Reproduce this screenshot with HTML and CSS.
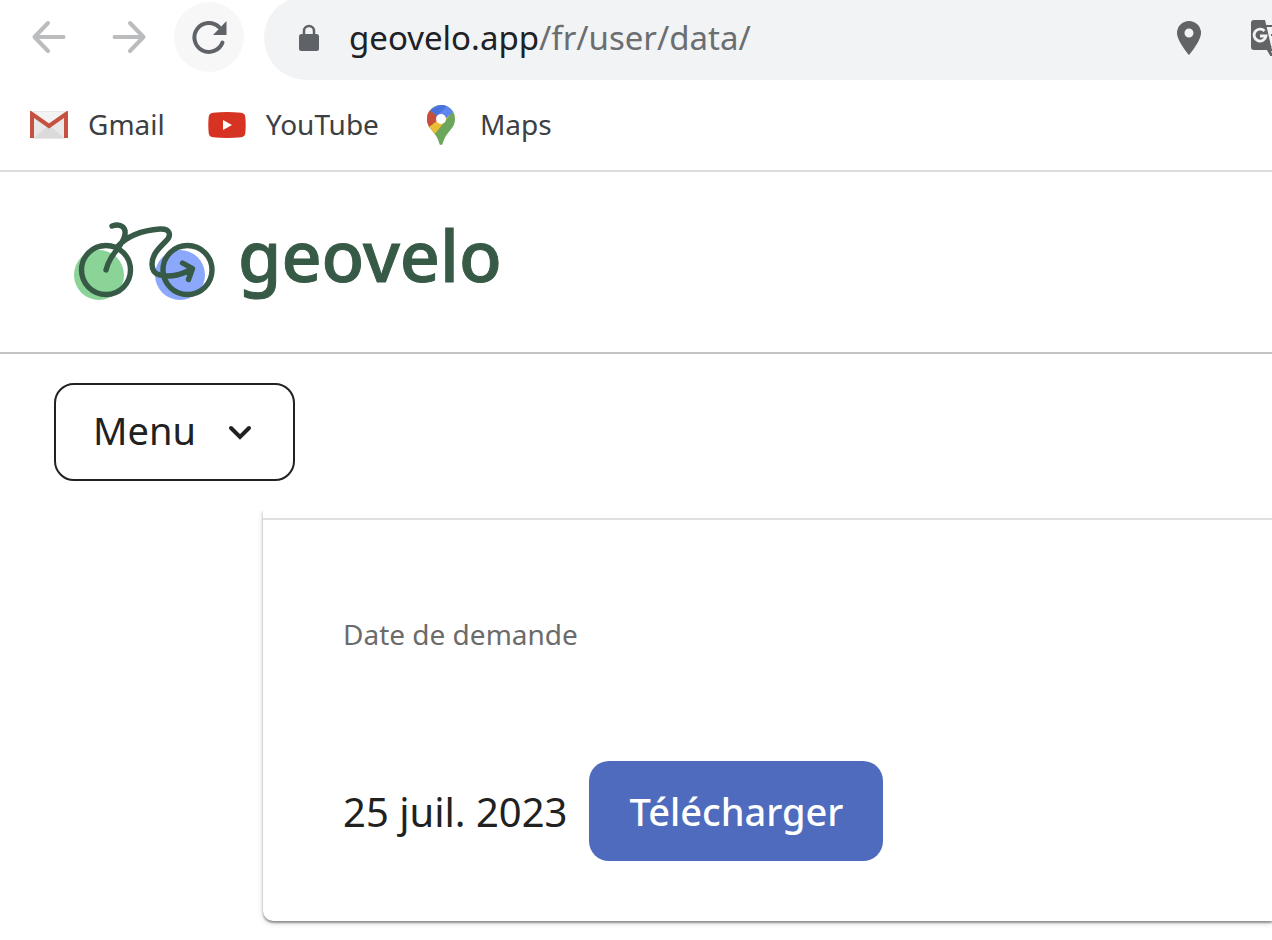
FILE: index.html
```html
<!DOCTYPE html>
<html lang="fr">
<head>
<meta charset="utf-8">
<title>Geovelo</title>
<link rel="stylesheet" href="styles.css">
</head>
<body>
<div class="browser">
  <div class="toolbar">
    <button class="tool" aria-label="Retour">
      <svg width="36" height="36" viewBox="0 0 36 36" class="arrow"><path d="M32.500 18H3.500M17 4L3.500 18 17 32"/></svg>
    </button>
    <button class="tool" aria-label="Avancer">
      <svg width="36" height="36" viewBox="0 0 36 36" class="arrow"><path d="M3.500 18h29M19 4l13.500 14L19 32"/></svg>
    </button>
    <button class="tool tool-active" aria-label="Actualiser">
      <svg width="40" height="40" viewBox="0 0 40 40"><path d="M33.500 25.500A14.500 14.500 0 1 1 30 10" fill="none" stroke="#5f6368" stroke-width="4" stroke-linecap="round"/><path d="M37.500 4v14H24z" fill="#5f6368"/></svg>
    </button>
    <div class="omnibox">
      <svg class="lock" width="20" height="28" viewBox="0 0 20 28"><path d="M5 11V7a5 5 0 0 1 10 0v4" fill="none" stroke="#5f6368" stroke-width="2.500"/><rect y="10" width="20" height="17" rx="2.500" fill="#5f6368"/></svg>
      <span class="url">geovelo.app<span class="path">/fr/user/data/</span></span>
      <button class="chip" aria-label="Position">
        <svg width="24" height="34" viewBox="0 0 24 34"><path fill-rule="evenodd" d="M12 0A12 12 0 0 0 0 12c0 8 12 22 12 22s12-14 12-22A12 12 0 0 0 12 0zm0 7.500a4.500 4.500 0 1 1 0 9 4.500 4.500 0 0 1 0-9z" fill="#616365"/></svg>
      </button>
      <button class="chip" aria-label="Traduire">
        <svg width="40" height="36" viewBox="0 0 40 36"><path d="M14 6h22q3 0 3 3v23q0 3-3 3H20z" fill="#f1f3f4" stroke="#616365" stroke-width="2"/><path d="M17 30l3 5 6-5zM20 15h14M26 11v4M30 15c-1 6-5 9-9 12M23 18c2 4 5 6 9 8" fill="none" stroke="#616365" stroke-width="2"/><path d="M3 0h11l7 30H3q-3 0-3-3V3q0-3 3-3z" fill="#616365"/><path d="M13.500 11A6 6 0 1 0 15 16H9" fill="none" stroke="#f1f3f4" stroke-width="2.800"/></svg>
      </button>
    </div>
  </div>
  <nav class="bookmarks" aria-label="Favoris">
    <a href="#gmail">
      <svg width="38" height="28" viewBox="0 0 38 28"><rect x="2" width="34" height="28" rx="2" fill="#e8e8e8"/><path d="M4 27l15-13 15 13z" fill="#dadada"/><path d="M3 1h32L19 13z" fill="#f3f3f3"/><path d="M2 27V3l17 12L36 3v24" fill="none" stroke="#c5523f" stroke-width="4"/></svg>
      <span>Gmail</span>
    </a>
    <a href="#youtube">
      <svg width="38" height="26" viewBox="0 0 38 26"><path d="M5 .8Q19-.8 33 .8q4 .4 4.300 4.200.8 8 0 16-.3 3.800-4.300 4.200-14 1.600-28 0Q1 24.800.7 21q-.8-8 0-16Q1 1.200 5 .8z" fill="#d63322"/><path d="M15 8v10l9-5z" fill="#fff"/></svg>
      <span>YouTube</span>
    </a>
    <a href="#maps">
      <svg width="38" height="40" viewBox="0 0 38 40"><defs><clipPath id="pin"><path d="M19 0A14 14 0 0 0 5 14c0 6 3 9 7 14 3 4 4.500 7 5.500 11 .3 1.200 2.700 1.200 3 0 1-4 2.500-7 5.500-11 4-5 7-8 7-14A14 14 0 0 0 19 0z"/></clipPath></defs><g clip-path="url(#pin)"><path d="M0 0h38v40H0z" fill="#6ba65a"/><path d="M5 23L22 6l6 4L8 35-2 28z" fill="#e9bd37"/><path d="M0 0l19 13L7 22-3 22z" fill="#c94f3d"/><path d="M8 5L19-3l15 7-3 3-13 12-4-9z" fill="#5f85ee"/><path d="M8 5L19 0h7L15 11z" fill="#4a72df"/></g><circle cx="19" cy="14" r="5" fill="#fff"/></svg>
      <span>Maps</span>
    </a>
  </nav>
</div>
<header class="site-header">
  <a class="brand" href="#accueil">
    <svg width="142" height="78" viewBox="0 0 142 78"><circle cx="25" cy="53" r="25" fill="#8bd497"/><circle cx="106" cy="53" r="25" fill="#8ba8fc"/><g fill="none" stroke="#375a47" stroke-width="5.400" stroke-linecap="round" stroke-linejoin="round"><circle cx="32" cy="48" r="24.500"/><circle cx="113.500" cy="48" r="24.500"/><path d="M38 4C46 1 52 5 51 12c-1 9-10 17-14 24-3 5-4 8-5 12M43 25C55 12 71 8 86 7c10-.5 12 6 6 12-8 8-14 14-14 23 0 6 3 10 8 11 12 3 22-1 32-6M108.500 41l10 5.500-4 11"/></g></svg>
    <span class="wordmark">geovelo</span>
  </a>
</header>
<div class="menu-bar">
  <button class="menu-button">
    <span>Menu</span>
    <svg width="24" height="16" viewBox="0 0 24 16"><path d="M3 4l9 9 9-9" fill="none" stroke="#212121" stroke-width="4" stroke-linecap="round"/></svg>
  </button>
</div>
<main class="content">
  <section class="card">
    <h2 class="label">Date de demande</h2>
    <div class="request">
      <span class="date">25 juil. 2023</span>
      <button class="download">Télécharger</button>
    </div>
  </section>
</main>
</body>
</html>
```
FILE: styles.css
```css
* { box-sizing: border-box; }
body {
  margin: 0;
  overflow: hidden;
  background: #fff;
  color: #212121;
  font-family: "Noto Sans", "Open Sans", sans-serif;
}
button { border: 0; padding: 0; background: none; color: inherit; font: inherit; }
a { color: inherit; text-decoration: none; }
svg { display: block; flex: none; }

.browser { border-bottom: 2px solid #dcdcdc; }
.toolbar { display: flex; align-items: center; gap: 10px; height: 80px; padding-left: 14px; overflow: hidden; }
.tool {
  display: flex;
  flex: none;
  align-items: center;
  justify-content: center;
  width: 70px;
  height: 70px;
  margin-bottom: 6px;
  border-radius: 50%;
}
.tool-active { background: #f7f7f7; }
.arrow { fill: none; stroke: #babcbe; stroke-width: 4; stroke-linecap: round; stroke-linejoin: round; }
.omnibox {
  display: flex;
  flex: 1;
  align-items: center;
  height: 84px;
  margin: -4px -19px 0 10px;
  padding-left: 35px;
  background: #f1f3f4;
  border-radius: 42px 0 0 42px;
}
.url { flex: 1; margin-left: 30px; font-size: 33px; line-height: 48px; color: #202124; }
.path { color: #6b6e71; }
.chip { margin-left: 50px; }

.bookmarks { display: flex; align-items: center; gap: 43px; height: 90px; padding-left: 30px; font-size: 28px; line-height: 40px; color: #3c4043; }
.bookmarks a { display: flex; align-items: center; gap: 20px; }
.bookmarks span { padding-bottom: 2px; }

.site-header { padding: 49px 74px 51px; border-bottom: 2px solid #c4c4c4; }
.brand { display: flex; align-items: center; gap: 22px; height: 80px; }
.wordmark { padding-bottom: 12px; color: #375a47; font-size: 70px; font-weight: 500; line-height: 80px; -webkit-text-stroke: 1px #375a47; }

.menu-bar { padding: 29px 54px; }
.menu-button {
  display: flex;
  align-items: center;
  gap: 32px;
  height: 98px;
  padding: 0 41px 0 37px;
  border: 2px solid #212121;
  border-radius: 20px;
  font-size: 38px;
}
.menu-button span { padding-bottom: 4px; }

.content { padding: 0 0 20px 263px; overflow: hidden; }
.card {
  padding: 8px 80px 60px;
  border-radius: 0 0 0 10px;
  box-shadow: 0 2px 2px rgba(0, 0, 0, .36), 0 2px 6px rgba(0, 0, 0, .16);
}
.card::before { content: ""; display: block; height: 2px; margin: 0 -80px 92px; background: #e0e0e0; }
.label { margin: 0 0 105px; color: #6b6b6b; font-size: 28px; font-weight: 400; line-height: 44px; }
.request { display: flex; align-items: center; gap: 22px; }
.date { font-size: 40px; }
.download { height: 100px; padding: 0 40px; border-radius: 20px; background: #4f6bbd; color: #fff; font-size: 38px; font-weight: 550; }
```
